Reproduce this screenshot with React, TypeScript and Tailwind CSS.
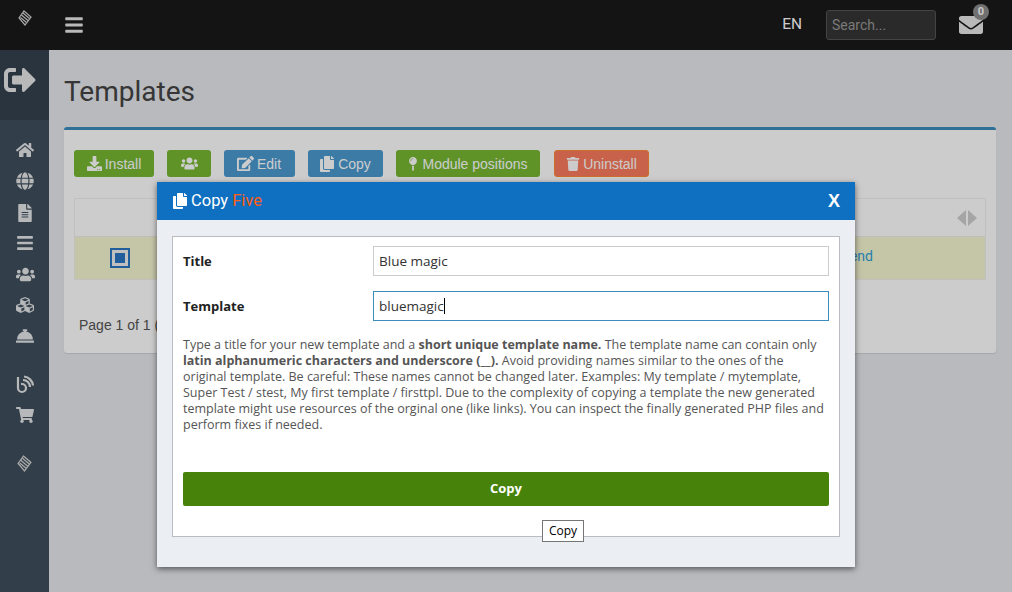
import React from "react";
import { FaBars, FaDownload, FaUsers, FaEdit, FaCopy, FaMapPin, FaTrash, FaHome, FaGlobe, FaFileAlt, FaCubes, FaConciergeBell, FaShoppingCart, FaEnvelope, FaSignOutAlt } from "react-icons/fa";

function Logo({ size = 16 }: { size?: number }) {
  return (
    <svg width={size} height={size} viewBox="0 0 16 16" fill="none" stroke="#d4d4d4" strokeWidth="1.2">
      <path d="M7 1 L14 7 L8 15 L2 8 Z" />
      <path d="M4.5 5 L11 10.5 M3.5 7.5 L9.5 12.5 M6 3 L12.5 8.5" />
    </svg>
  );
}

function BlogIcon() {
  return (
    <svg width="20" height="20" viewBox="0 0 20 20" fill="none" stroke="#e4e6e8" strokeWidth="2.2">
      <path d="M3 2 V13 a4 4 0 1 0 4 -4 H6" />
      <path d="M8 5 a7 7 0 0 1 7 7" />
      <path d="M9 1.5 a10 10 0 0 1 9 9" />
    </svg>
  );
}

function Btn({ color, className, icon, label }: { color: string; className: string; icon: React.ReactNode; label?: string }) {
  return (
    <button className={`h-[27px] rounded-[3px] flex items-center justify-center gap-[3px] text-white text-[14px] font-['Liberation_Sans',sans-serif] ${color} ${className}`}>
      {icon}
      {label && <span className="pt-[1px]">{label}</span>}
    </button>
  );
}

const sideIcon = "text-[#e4e6e8] text-[18px]";

export default function App() {
  return (
    <div className="relative w-[1012px] h-[592px] overflow-hidden bg-[#e6e9ee] flex flex-col font-['Roboto',sans-serif]">
      {/* top bar */}
      <header className="h-[50px] shrink-0 bg-[#191919] flex items-center">
        <div className="w-[49px] flex justify-center pb-[14px]"><Logo /></div>
        <div className="ml-[15px] text-[#e8e8e8] text-[20px]"><FaBars /></div>
        <div className="ml-auto text-white text-[15.5px] mr-[24px]">EN</div>
        <div className="w-[110px] h-[30px] mr-[23px] rounded-[3px] bg-[#353535] border border-[#555] px-[5px] flex items-center text-[14px] text-[#999]">Search...</div>
        <div className="relative mr-[29px] text-[#e8e8e8] text-[24px]">
          <FaEnvelope />
          <span className="absolute -top-[9px] -right-[6px] w-[16px] h-[16px] rounded-full bg-[#8c8c8c] text-white text-[11px] font-bold flex items-center justify-center">0</span>
        </div>
      </header>
      <div className="flex flex-1 min-h-0">
        {/* sidebar */}
        <aside className="w-[49px] shrink-0 bg-[#3f4e5c] flex flex-col items-center">
          <div className="w-full h-[70px] bg-[#35424e] flex pt-[14px] pl-[4px] text-[#e8e8e8] text-[32px]"><FaSignOutAlt /></div>
          <div className="flex flex-col items-center pt-[21px] pl-[1px]">
            <div className={`${sideIcon} h-[31px]`}><FaHome /></div>
            <div className={`${sideIcon} h-[32px] text-[17px]`}><FaGlobe /></div>
            <div className={`${sideIcon} h-[30px] text-[17px]`}><FaFileAlt /></div>
            <div className={`${sideIcon} h-[31px]`}><FaBars /></div>
            <div className={`${sideIcon} h-[31px] text-[19px]`}><FaUsers /></div>
            <div className={`${sideIcon} h-[31px]`}><FaCubes /></div>
            <div className={`${sideIcon} h-[48px]`}><FaConciergeBell /></div>
            <div className="h-[31px]"><BlogIcon /></div>
            <div className={`${sideIcon} h-[47px]`}><FaShoppingCart /></div>
            <div className="pt-[2px] pr-[2px]"><Logo size={17} /></div>
          </div>
        </aside>
        {/* main */}
        <main className="flex-1 min-w-0 pl-[15px] pr-[16px]">
          <h1 className="h-[77px] pt-[24px] text-[28px] leading-[36px] text-[#444]">Templates</h1>
          <section className="h-[226px] bg-white border-t-[3px] border-[#3c8dbc] rounded-[3px] shadow-[0_1px_1px_rgba(0,0,0,0.1)] px-[10px] pt-[20px]">
            <div className="flex">
              <Btn color="bg-[#77b833]" className="w-[80px] mr-[13px]" icon={<FaDownload className="text-[15px]" />} label="Install" />
              <Btn color="bg-[#77b833]" className="w-[44px] mr-[13px]" icon={<FaUsers className="text-[17px]" />} />
              <Btn color="bg-[#4a9ad0]" className="w-[71px] mr-[13px]" icon={<FaEdit className="text-[17px] -ml-[1px]" />} label="Edit" />
              <Btn color="bg-[#4a9ad0]" className="w-[75px] mr-[13px]" icon={<FaCopy className="text-[16px] -ml-[1px]" />} label="Copy" />
              <Btn color="bg-[#77b833]" className="w-[144px] mr-[14px]" icon={<FaMapPin className="text-[14px] -ml-[2px] -mr-[1px]" />} label="Module positions" />
              <Btn color="bg-[#fb7b5e] border border-[#ff8a33]" className="w-[95px]" icon={<FaTrash />} label="Uninstall" />
            </div>
            <div className="mt-[21px] border border-[#f0f0f0]">
              <div className="h-[38px] flex items-center justify-end pr-[8px] border-b border-[#eee]">
                <svg width="20" height="16" viewBox="0 0 20 16" fill="#cfcfcf">
                  <polygon points="9,0 9,16 0,8" />
                  <polygon points="11,0 11,16 20,8" />
                </svg>
              </div>
              <div className="h-[42px] bg-[#f7f7d2] flex items-center">
                <div className="ml-[35px] w-[20px] h-[20px] border-2 border-[#2a76c2] p-[3px] bg-[#f0f0f0]"><div className="w-full h-full bg-[#2a76c2]" /></div>
                <span className="ml-auto mr-[112px] text-[14px] text-[#2f9fd8] -mt-[4px]">Frontend</span>
              </div>
            </div>
            <div className="mt-[35px] ml-[5px] text-[14px] text-[#555] font-['Liberation_Sans',sans-serif]">Page 1 of 1 (1 items)</div>
          </section>
        </main>
      </div>
      {/* dim overlay */}
      <div className="absolute inset-0 bg-black/20" />
      {/* modal */}
      <div className="absolute left-[157px] top-[182px] w-[698px] h-[385px] bg-[#ebeef3] shadow-[0_2px_6px_rgba(0,0,0,0.55)] flex flex-col">
        <div className="h-[38px] shrink-0 bg-[#0f6fc0] flex items-center pl-[15px] pr-[15px] text-white text-[16.5px]">
          <FaCopy className="text-[16px] mr-[3px]" />
          <span>Copy <span className="text-[#ff5e14]">Five</span></span>
          <span className="ml-auto font-bold text-[18px] font-['Liberation_Sans',sans-serif]">X</span>
        </div>
        <div className="mx-[15px] mt-[16px] h-[301px] bg-white border border-[#b9bcc0] px-[10px] pt-[9px] font-['Open_Sans',sans-serif]">
          <div className="flex items-center h-[30px]">
            <label className="w-[190px] text-[13px] font-bold text-[#222] pt-[2px]">Title</label>
            <div className="w-[456px] h-[30px] border border-[#ccc] px-[5px] flex items-center text-[13.5px] text-[#333]">Blue magic</div>
          </div>
          <div className="flex items-center h-[30px] mt-[15px]">
            <label className="w-[190px] text-[13px] font-bold text-[#222] pt-[2px]">Template</label>
            <div className="w-[456px] h-[30px] border border-[#3c8dbc] px-[5px] flex items-center text-[13.5px] text-[#333]">bluemagic<span className="w-px h-[16px] bg-black" /></div>
          </div>
          <p className="mt-[16px] text-[12.5px] leading-[16px] text-[#555] whitespace-nowrap">
            Type a title for your new template and a <b>short unique template name.</b> The template name can contain only<br />
            <b>latin alphanumeric characters and underscore (__).</b> Avoid providing names similar to the ones of the<br />
            original template. Be careful: These names cannot be changed later. Examples: My template / mytemplate,<br />
            Super Test / stest, My first template / firsttpl. Due to the complexity of copying a template the new generated<br />
            template might use resources of the orginal one (like links). You can inspect the finally generated PHP files and<br />
            perform fixes if needed.
          </p>
          <button className="mt-[39px] w-[646px] h-[34px] rounded-[2px] bg-[#47820a] text-white text-[13px] font-bold">Copy</button>
        </div>
      </div>
      {/* tooltip */}
      <div className="absolute left-[542px] top-[520px] w-[42px] h-[22px] bg-white border border-[#767676] flex items-center justify-center text-[12px] text-black font-['Open_Sans',sans-serif]">Copy</div>
    </div>
  );
}
